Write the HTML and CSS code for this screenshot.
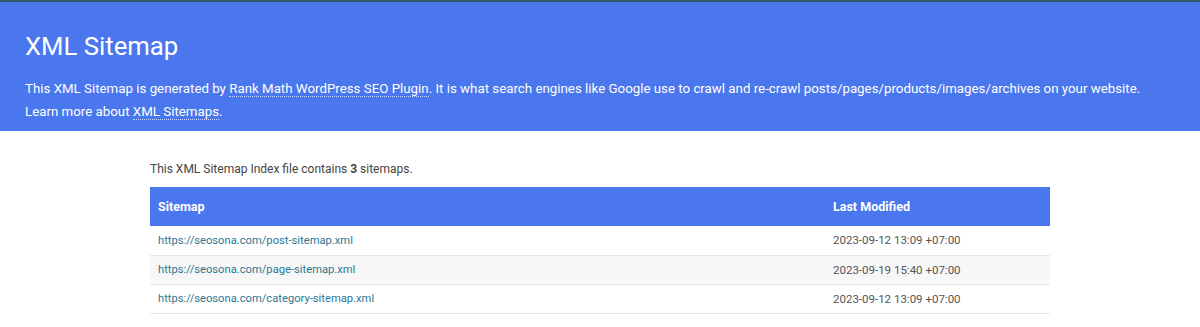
FILE: index.html
```html
<!DOCTYPE html>
<html lang="en">
  <head>
    <meta charset="UTF-8" />
    <meta name="viewport" content="width=device-width, initial-scale=1.0" />
    <title>XML Sitemap</title>
    <link rel="stylesheet" href="styles.css">
  </head>
  <body>
    <div class="header">
      <h1>XML Sitemap</h1>
      <p>
        This XML Sitemap is generated by <a href="#">Rank Math WordPress SEO Plugin</a>. It is what search engines like Google use to crawl and re-crawl posts/pages/products/images/archives on your website.<br>
        Learn more about <a href="#">XML Sitemaps</a>.
      </p>
    </div>
    <div class="content">
      <p class="count">This XML Sitemap Index file contains <strong>3</strong> sitemaps.</p>
      <table class="sitemaps">
        <thead>
          <tr>
            <th class="col-url">Sitemap</th>
            <th>Last Modified</th>
          </tr>
        </thead>
        <tbody>
          <tr>
            <td><a href="#">https://seosona.com/post-sitemap.xml</a></td>
            <td class="date">2023-09-12 13:09 +07:00</td>
          </tr>
          <tr>
            <td><a href="#">https://seosona.com/page-sitemap.xml</a></td>
            <td class="date">2023-09-19 15:40 +07:00</td>
          </tr>
          <tr>
            <td><a href="#">https://seosona.com/category-sitemap.xml</a></td>
            <td class="date">2023-09-12 13:09 +07:00</td>
          </tr>
        </tbody>
      </table>
    </div>
  </body>
</html>
```

FILE: styles.css
```css
* {
  padding: 0;
  margin: 0;
  box-sizing: border-box;
}
body {
  font-family: Roboto, "Noto Sans", sans-serif;
  color: #444;
  background: #fff;
  border-top: 2px solid #2e5c68;
}
/* -------------- */
.header {
  background-color: #4a76ee;
  color: #fff;
  padding: 28px 25px 13px;
  height: 129px;
}
.header h1 {
  font-size: 25.7px;
  font-weight: 400;
  line-height: 32px;
  margin-bottom: 15px;
}
.header p {
  font-size: 13.3px;
  line-height: 23px;
  white-space: nowrap;
}
.header a {
  color: #fff;
  text-decoration: none;
  border-bottom: 1px dotted rgba(255, 255, 255, 0.7);
}
.content {
  width: 900px;
  margin: 0 auto;
  padding-top: 30px;
}
.count {
  font-size: 12px;
  line-height: 16px;
  margin-bottom: 10px;
}
.count strong {
  font-weight: 700;
}
.sitemaps {
  width: 100%;
  border-collapse: collapse;
  font-size: 11.2px;
}
.sitemaps th {
  background-color: #4a76ee;
  color: #fff;
  text-align: left;
  font-weight: 700;
  font-size: 12.5px;
  height: 39px;
  padding: 0 8px;
}
.sitemaps .col-url {
  width: 675px;
}
.sitemaps td {
  height: 29px;
  padding: 0 8px;
  border-bottom: 1px solid #e6e6e6;
  color: #555;
}
.sitemaps td.date {
  font-size: 11.5px;
}
.sitemaps tbody tr:nth-child(even) td {
  background-color: #f7f7f7;
}
.sitemaps td a {
  color: #2a7796;
  text-decoration: none;
}
```
